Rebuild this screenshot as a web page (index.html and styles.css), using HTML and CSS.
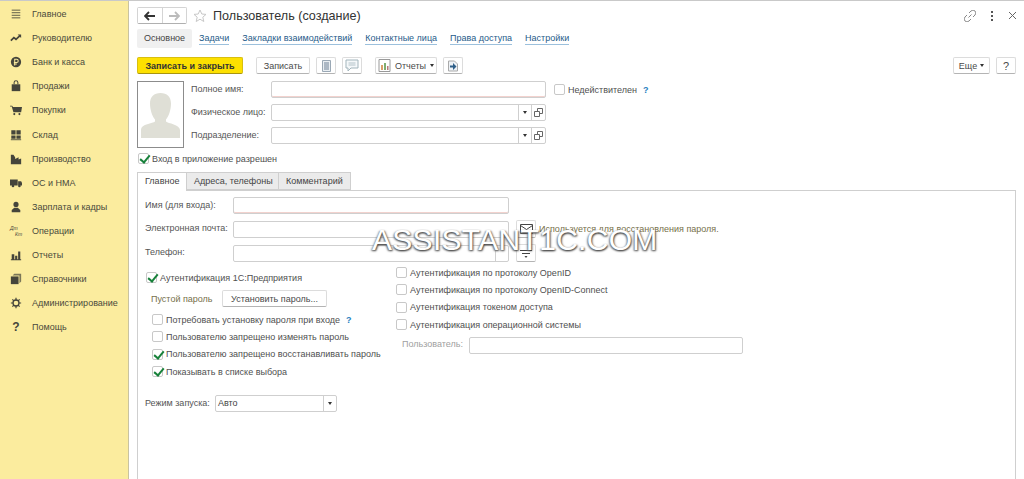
FILE: index.html

```html
<!DOCTYPE html>
<html lang="ru">
<head>
    <meta charset="UTF-8">
    <title>Пользователь (создание)</title>
    <link rel="stylesheet" href="styles.css">
</head>
<body>

<nav class="sidebar">
    <a class="side-item"><svg class="side-icon" viewBox="0 0 14 14"><path d="M2 2.500h10M2 5.500h10M2 8.500h10M2 11.500h10" stroke="currentColor" fill="none"/></svg>Главное</a>
    <a class="side-item"><svg class="side-icon" viewBox="0 0 14 14"><path d="M1 10l3.500-3.500 2.500 2L12 4" stroke="currentColor" stroke-width="2" fill="none"/><path d="M9 3h4v4z" fill="currentColor"/></svg>Руководителю</a>
    <a class="side-item"><svg class="side-icon" viewBox="0 0 14 14"><circle cx="7" cy="7" r="6" fill="currentColor"/><path d="M5.500 11V3.800h2.200a1.800 1.800 0 0 1 0 3.800H4.500M4.500 9.300h3.500" stroke="#fbec9e" stroke-width="1.200" fill="none"/></svg>Банк и касса</a>
    <a class="side-item"><svg class="side-icon" viewBox="0 0 14 14"><path d="M2 5h10v8H2z" fill="currentColor"/><path d="M4.800 5V3a2.200 2.200 0 0 1 4.400 0v2" stroke="currentColor" stroke-width="1.200" fill="none"/></svg>Продажи</a>
    <a class="side-item"><svg class="side-icon" viewBox="0 0 14 14"><path d="M0 2h2.500l1 1.500H14l-1 6H4L2 3H0z" fill="currentColor"/><circle cx="5" cy="11.800" r="1.200" fill="currentColor"/><circle cx="11" cy="11.800" r="1.200" fill="currentColor"/></svg>Покупки</a>
    <a class="side-item"><svg class="side-icon" viewBox="0 0 14 14"><path d="M1.500 1.500h5v5h-5zM7.500 1.500h5v5h-5zM1.500 7.500h5v4h-5zM7.500 7.500h5v4h-5z" fill="currentColor"/><path d="M1 12.500h12" stroke="currentColor"/></svg>Склад</a>
    <a class="side-item"><svg class="side-icon" viewBox="0 0 14 14"><path d="M1 13V2h3l2 3v2l4-2v2.500l3-1V13z" fill="currentColor"/></svg>Производство</a>
    <a class="side-item"><svg class="side-icon" viewBox="0 0 14 14"><path d="M0 3h9v7H0zM9.500 5H13l1 2v3H9.500z" fill="currentColor"/><circle cx="3.500" cy="10.500" r="1.500" fill="currentColor"/><circle cx="11" cy="10.500" r="1.500" fill="currentColor"/></svg>ОС и НМА</a>
    <a class="side-item"><svg class="side-icon" viewBox="0 0 14 14"><circle cx="7" cy="4" r="3" fill="currentColor"/><path d="M2 13v-2.500L5 8h4l3 2.500V13z" fill="currentColor"/></svg>Зарплата и кадры</a>
    <a class="side-item"><span class="side-icon dtkt"><span>Дт</span><span class="kt">Кт</span></span>Операции</a>
    <a class="side-item"><svg class="side-icon" viewBox="0 0 14 14"><path d="M2 6h3v6H2zM6 8h2.500v4H6zM9.500 3H12v9H9.500zM1 12h12v1H1z" fill="currentColor"/></svg>Отчеты</a>
    <a class="side-item"><svg class="side-icon" viewBox="0 0 14 14"><path d="M1 4h9v9H1z" fill="currentColor"/><path d="M3 3l2-2h8v9l-2 2V3z" fill="currentColor" opacity=".7"/></svg>Справочники</a>
    <a class="side-item"><svg class="side-icon" viewBox="0 0 14 14"><circle cx="7" cy="7" r="3.500" stroke="currentColor" stroke-width="1.500" fill="none"/><path d="M7 1v3M7 10v3M1 7h3M10 7h3M2.800 2.800l2 2M9.200 9.200l2 2M2.800 11.200l2-2M9.200 4.800l2-2" stroke="currentColor" stroke-width="1.400"/></svg>Администрирование</a>
    <a class="side-item"><span class="side-icon help-mark">?</span>Помощь</a>
</nav>

<main class="page">

    <header class="titlebar">
        <div class="nav-buttons">
            <button class="nav-btn"><svg width="12" height="10" viewBox="0 0 12 10"><path d="M1 5h10M5 1L1 5l4 4" stroke="#333" stroke-width="1.800" fill="none"/></svg></button>
            <button class="nav-btn"><svg width="12" height="10" viewBox="0 0 12 10"><path d="M1 5h10M7 1l4 4-4 4" stroke="#bbb" stroke-width="1.800" fill="none"/></svg></button>
        </div>
        <svg class="star" width="14" height="14" viewBox="0 0 14 14"><path d="M7 1l1.800 4 4.200.4-3.200 2.800 1 4.300L7 10.200 3.200 12.500l1-4.300L1 5.400 5.200 5z" fill="none" stroke="#c8c8c8"/></svg>
        <h1 class="title">Пользователь (создание)</h1>
        <div class="window-tools">
            <svg width="12" height="12" viewBox="0 0 12 12"><path d="M5 3l2-2a2 2 0 0 1 4 4L9 7M7 9l-2 2a2 2 0 0 1-4-4l2-2M4.500 7.500l3-3" stroke="#888" fill="none"/></svg>
            <svg width="4" height="12" viewBox="0 0 4 12"><path d="M1 2h2M1 6h2M1 10h2" stroke="#555" stroke-width="2"/></svg>
            <svg width="9" height="9" viewBox="0 0 9 9"><path d="M1 1l7 7M8 1L1 8" stroke="#666"/></svg>
        </div>
    </header>

    <div class="section-tabs">
        <span class="section-tab active">Основное</span>
        <a class="section-tab">Задачи</a>
        <a class="section-tab">Закладки взаимодействий</a>
        <a class="section-tab">Контактные лица</a>
        <a class="section-tab">Права доступа</a>
        <a class="section-tab">Настройки</a>
    </div>

    <div class="toolbar">
        <button class="btn primary">Записать и закрыть</button>
        <button class="btn save">Записать</button>
        <button class="btn icon"><svg width="9" height="12" viewBox="0 0 9 12"><path d="M.5.500h8v11h-8z" fill="#e9eef2" stroke="#9aa8b5"/><path d="M2 3h5M2 5h5M2 7h5M2 9h5" stroke="#6f8196"/></svg></button>
        <button class="btn icon comment"><svg width="14" height="13" viewBox="0 0 14 13"><path d="M1 1h12v8H6l-3 3V9H1z" fill="#f5f8fa" stroke="#a3b5bc"/><path d="M3.500 4h7M3.500 6h7" stroke="#b3c2c8"/></svg></button>
        <button class="btn reports"><svg width="13" height="13" viewBox="0 0 13 13"><path d="M1 .5h11v12H1z" fill="#fff" stroke="#999"/><path d="M3 6h2v5H3z" fill="#d9a06b"/><path d="M6 4h2v7H6z" fill="#7fae70"/><path d="M9 7h1.500v4H9z" fill="#b57a7a"/></svg>Отчеты<span class="caret"></span></button>
        <button class="btn icon"><svg width="12" height="12" viewBox="0 0 12 12"><path d="M1.500 1h6l3 3v7h-9z" fill="#eef2f6" stroke="#aaa"/><path d="M3 5.500h3V3l3.500 3.500L6 10V7.500H3z" fill="#2f5f88"/></svg></button>
        <div class="toolbar-right">
            <button class="btn more">Еще<span class="caret"></span></button>
            <button class="btn question">?</button>
        </div>
    </div>

    <section class="head-form">
        <div class="photo">
            <svg width="39" height="45" viewBox="0 0 39 45"><path d="M19.500 0c6.500 0 10.500 4 10.500 10.500 0 7-2.500 13-5 16v2c2 2 14 3 14 8.500V45H0v-8.500C0 31 12 30.500 14 28.500v-2c-2.500-3-5-9-5-16C9 4 13 0 19.500 0z" fill="#dfdfd6"/></svg>
        </div>
        <div class="head-fields">
            <div class="form-row">
                <label class="label head-label">Полное имя:</label>
                <div class="input required head-input"></div>
                <span class="check head-check"></span><span class="text">Недействителен</span><span class="hint">?</span>
            </div>
            <div class="form-row">
                <label class="label head-label">Физическое лицо:</label>
                <div class="input head-input"><span class="field-btn"><span class="caret"></span></span><span class="field-btn"><svg width="9" height="9" viewBox="0 0 9 9"><path d="M3.500.5h5v5h-5z" fill="none" stroke="#666"/><path d="M.5 3.500h5v5h-5z" fill="#fff" stroke="#666"/></svg></span></div>
            </div>
            <div class="form-row">
                <label class="label head-label">Подразделение:</label>
                <div class="input head-input"><span class="field-btn"><span class="caret"></span></span><span class="field-btn"><svg width="9" height="9" viewBox="0 0 9 9"><path d="M3.500.5h5v5h-5z" fill="none" stroke="#666"/><path d="M.5 3.500h5v5h-5z" fill="#fff" stroke="#666"/></svg></span></div>
            </div>
        </div>
    </section>

    <div class="login-allowed">
        <span class="check on"></span><span class="text">Вход в приложение разрешен</span>
    </div>

    <div class="page-tabs">
        <span class="page-tab active">Главное</span>
        <span class="page-tab">Адреса, телефоны</span>
        <span class="page-tab">Комментарий</span>
    </div>

    <section class="panel">
        <div class="form-row">
            <label class="label panel-label">Имя (для входа):</label>
            <div class="input required panel-input"></div>
        </div>
        <div class="form-row">
            <label class="label panel-label">Электронная почта:</label>
            <div class="input panel-input"></div>
            <button class="btn side-btn"><svg width="13" height="10" viewBox="0 0 13 10"><path d="M.5.500h12v9H.5zM.5 1.500L6.500 5.500l6-4" fill="none" stroke="#444"/></svg></button>
            <span class="note">Используется для восстановления пароля.</span>
        </div>
        <div class="form-row">
            <label class="label panel-label">Телефон:</label>
            <div class="input panel-input"><span class="field-btn"></span></div>
            <button class="btn side-btn"><svg width="14" height="11" viewBox="0 0 14 11"><path d="M1 2.500h12M3 5.500h8" stroke="#444"/><path d="M5.500 8h3L7 10z" fill="#444"/></svg></button>
        </div>

        <div class="auth-columns">
            <div class="auth-left">
                <div class="check-row auth-main"><span class="check on"></span><span class="text">Аутентификация 1С:Предприятия</span></div>
                <div class="password-row">
                    <span class="note password-note">Пустой пароль</span>
                    <button class="btn set-password">Установить пароль...</button>
                </div>
                <div class="check-list">
                    <div class="check-row"><span class="check"></span><span class="text">Потребовать установку пароля при входе</span><span class="hint">?</span></div>
                    <div class="check-row"><span class="check"></span><span class="text">Пользователю запрещено изменять пароль</span></div>
                    <div class="check-row"><span class="check on"></span><span class="text">Пользователю запрещено восстанавливать пароль</span></div>
                    <div class="check-row"><span class="check on"></span><span class="text">Показывать в списке выбора</span></div>
                </div>
            </div>
            <div class="auth-right">
                <div class="check-row"><span class="check"></span><span class="text">Аутентификация по протоколу OpenID</span></div>
                <div class="check-row"><span class="check"></span><span class="text">Аутентификация по протоколу OpenID-Connect</span></div>
                <div class="check-row"><span class="check"></span><span class="text">Аутентификация токеном доступа</span></div>
                <div class="check-row"><span class="check"></span><span class="text">Аутентификация операционной системы</span></div>
                <div class="form-row os-user">
                    <label class="label muted os-label">Пользователь:</label>
                    <div class="input os-input"></div>
                </div>
            </div>
        </div>

        <div class="form-row launch-row">
            <label class="label launch-label">Режим запуска:</label>
            <div class="input launch-input"><span class="value">Авто</span><span class="field-btn"><span class="caret"></span></span></div>
        </div>
    </section>

</main>

<div class="watermark">ASSISTANT1C.COM</div>

</body>
</html>
```

FILE: styles.css

```css
* {
    box-sizing: border-box;
}
html, body {
    margin: 0;
    height: 479px;
    overflow: hidden;
}
body {
    display: flex;
    font-family: "Liberation Sans", Arial, sans-serif;
    font-size: 9px;
    color: #4a4a4a;
    background: #fff;
    border-top: 1px solid #c9c9c9;
    position: relative;
}
button {
    font-family: inherit;
    color: inherit;
    padding: 0;
}

/* sidebar */
.sidebar {
    width: 129px;
    flex: none;
    background: #fbec9e;
    border-right: 1px solid #c9c3a0;
    padding-top: 1px;
}
.side-item {
    display: flex;
    align-items: center;
    height: 24.1px;
    color: #4a4a3c;
}
.side-icon {
    width: 12px;
    height: 12px;
    margin: 0 10px 0 10px;
    color: #45453b;
    flex: none;
}
.dtkt {
    display: flex;
    flex-direction: column;
    font-size: 5px;
    line-height: 6px;
    font-style: italic;
}
.dtkt .kt {
    margin-left: 5px;
}
.help-mark {
    font-size: 12px;
    font-weight: bold;
    text-align: center;
    line-height: 12px;
}

/* main column */
.page {
    flex: 1;
    min-width: 0;
    padding: 0 8px 0 8px;
}
.titlebar {
    display: flex;
    align-items: center;
    height: 28px;
    padding-top: 1px;
}
.nav-buttons {
    display: flex;
    width: 50px;
    height: 17px;
    border: 1px solid #d4d4d4;
    border-bottom-color: #b0b0b0;
    border-radius: 2px;
}
.nav-btn {
    flex: 1;
    border: none;
    background: #fff;
    display: flex;
    align-items: center;
    justify-content: center;
}
.nav-btn:first-child {
    border-right: 1px solid #d4d4d4;
}
.star {
    margin-left: 6px;
}
.title {
    margin: 0 0 0 6px;
    font-size: 12.6px;
    font-weight: normal;
    color: #333;
}
.window-tools {
    margin-left: auto;
    margin-right: -1px;
    display: flex;
    align-items: center;
    gap: 14px;
}

.section-tabs {
    display: flex;
    height: 19px;
    align-items: center;
}
.section-tab {
    margin-right: 13px;
    color: #1f5c8a;
    border-bottom: 1px solid #9cc0dc;
    line-height: 11px;
}
.section-tab.active {
    width: 55px;
    margin-right: 7px;
    padding: 4px 0;
    height: 19px;
    text-align: center;
    background: #f0f0f0;
    border: none;
    border-radius: 2px;
    color: #444;
}

/* buttons */
.toolbar {
    display: flex;
    align-items: center;
    margin-top: 9px;
    height: 17px;
}
.btn {
    height: 17px;
    background: #fff;
    border: 1px solid #dcdcdc;
    border-bottom-color: #b4b4b4;
    border-radius: 2px;
    font-size: 9px;
    display: inline-flex;
    align-items: center;
    justify-content: center;
}
.btn.primary {
    width: 106px;
    background: #fde000;
    border-color: #d8bf10;
    border-bottom-color: #a89410;
    font-weight: bold;
    color: #333;
}
.btn.save {
    width: 54px;
    margin-left: 13px;
}
.btn.icon {
    width: 20px;
    margin-left: 6px;
}
.btn.reports {
    width: 62px;
    margin-left: 13px;
    gap: 4px;
}
.toolbar-right {
    margin-left: auto;
    display: flex;
    gap: 6px;
}
.btn.more {
    width: 37px;
    gap: 3px;
}
.btn.question {
    width: 20px;
    font-size: 11px;
}
.caret {
    display: inline-block;
    width: 0;
    height: 0;
    border: 2px solid transparent;
    border-top: 3px solid #333;
    border-bottom: none;
}

/* fields */
.form-row {
    display: flex;
    align-items: center;
}
.label {
    color: #555;
    flex: none;
    padding-bottom: 2px;
}
.muted {
    color: #a0a0a0;
}
.input {
    height: 17px;
    background: #fff;
    border: 1px solid #cfcfcf;
    border-radius: 2px;
    display: flex;
    justify-content: flex-end;
    flex: none;
}
.input.required {
    box-shadow: inset 0 -1px 0 #f2d2ce;
}
.field-btn {
    width: 13px;
    border-left: 1px solid #cfcfcf;
    display: flex;
    align-items: center;
    justify-content: center;
}
.field-btn + .field-btn {
    width: 14px;
}
.value {
    flex: 1;
    padding-left: 2px;
    line-height: 15px;
    color: #444;
}
.check {
    width: 11px;
    height: 11px;
    flex: none;
    border: 1px solid #c8c8c8;
    border-radius: 2px;
    background: #fff;
    position: relative;
}
.check.on::after {
    content: "";
    position: absolute;
    left: 3px;
    top: -1px;
    width: 4px;
    height: 8px;
    border: solid #17813a;
    border-width: 0 2px 2px 0;
    transform: rotate(40deg);
}
.text {
    margin-left: 3px;
    color: #4f4f4f;
}
.hint {
    margin-left: 6px;
    color: #1f7fc0;
    font-weight: bold;
}
.note {
    color: #76704a;
}

/* top form */
.head-form {
    display: flex;
    margin-top: 7px;
}
.photo {
    width: 47px;
    height: 67px;
    flex: none;
    border: 1px solid #8c8c8c;
    display: flex;
    align-items: flex-end;
    justify-content: center;
    padding-bottom: 9px;
}
.head-fields {
    margin-left: 7px;
    display: flex;
    flex-direction: column;
    gap: 6px;
}
.head-label {
    width: 80px;
}
.head-input {
    width: 275px;
}
.head-check {
    margin-left: 8px;
}
.login-allowed {
    display: flex;
    align-items: center;
    margin: 5px 0 0 1px;
    height: 11px;
}

/* page tabs */
.page-tabs {
    display: flex;
    margin-top: 8px;
    height: 18px;
}
.page-tab {
    padding: 0 7px;
    line-height: 17px;
    white-space: nowrap;
    background: #ebebeb;
    border: 1px solid #cfcfcf;
    border-left: none;
    color: #444;
}
.page-tab:nth-child(1) {
    width: 50px;
    border-left: 1px solid #cfcfcf;
    background: #fff;
    border-bottom: none;
    height: 19px;
    position: relative;
    z-index: 1;
}
.page-tab:nth-child(2) {
    width: 92px;
}
.page-tab:nth-child(3) {
    width: 72px;
}
.panel {
    height: 290px;
    border: 1px solid #cfcfcf;
    padding: 6px 0 0 7px;
    display: flex;
    flex-direction: column;
}
.panel > .form-row + .form-row {
    margin-top: 6px;
}
.panel-label {
    width: 88px;
}
.panel-input {
    width: 276px;
}
.side-btn {
    width: 20px;
    height: 18px;
    margin-left: 7px;
    flex: none;
}
.side-btn + .note {
    margin-left: 3px;
    padding-bottom: 1px;
}
.auth-columns {
    display: flex;
    margin-top: 10px;
}
.auth-left {
    width: 251px;
    flex: none;
}
.check-row {
    display: flex;
    align-items: center;
    height: 11px;
}
.auth-main {
    margin-left: 1px;
}
.password-row {
    display: flex;
    align-items: center;
    margin: 7px 0 0 6px;
}
.password-note {
    width: 71px;
}
.set-password {
    width: 105px;
}
.check-list {
    margin: 4px 0 0 7px;
    display: flex;
    flex-direction: column;
}
.check-list .check-row {
    height: 17.3px;
}
.auth-right {
    margin-top: -5px;
    display: flex;
    flex-direction: column;
    gap: 6.4px;
}
.os-user {
    margin: 0 0 0 6px;
}
.os-label {
    width: 67px;
}
.os-input {
    width: 274px;
}
.launch-row {
    margin-top: 15px;
}
.launch-label {
    width: 70px;
}
.launch-input {
    width: 122px;
}

/* sits over the form */
.watermark {
    position: absolute;
    left: 372px;
    top: 222px;
    font-size: 30px;
    letter-spacing: .3px;
    color: #fff;
    text-shadow: 1px 1px 2px #444, -1px 1px 2px #777;
    white-space: nowrap;
}
```
